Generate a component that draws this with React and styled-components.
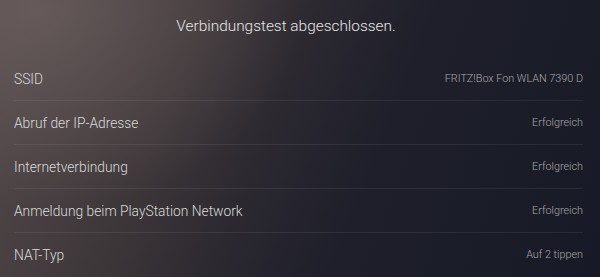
import styled, { createGlobalStyle } from 'styled-components'

const GlobalStyle = createGlobalStyle`
  html, body {
    margin: 0;
    padding: 0;
    background: #171a26;
  }
  * { box-sizing: border-box; }
`

const Screen = styled.div`
  width: 600px;
  height: 277px;
  overflow: hidden;
  font-family: Roboto, "Open Sans", "Liberation Sans", sans-serif;
  font-weight: 300;
  color: #dcdcdc;
  background:
    radial-gradient(ellipse 260px 200px at 40px 10px, rgba(120, 106, 104, 0.55), rgba(120, 106, 104, 0) 100%),
    linear-gradient(112deg, #544a4b 0%, #3d3639 30%, #2b2830 46%, #1e1f2b 62%, #171a26 100%);
  display: flex;
  flex-direction: column;
`

const Title = styled.h1`
  margin: 0;
  height: 59px;
  padding: 16px 28px 0 0;
  text-align: center;
  font-size: 15.4px;
  font-weight: 300;
  line-height: 20px;
  color: #e6e6e6;
`

const List = styled.div`
  display: flex;
  flex-direction: column;
  padding: 0 17px 0 14px;
`

const Row = styled.div`
  height: 44px;
  display: flex;
  align-items: center;
  justify-content: space-between;
  border-bottom: 1px solid ${p => (p.$last ? 'transparent' : 'rgba(255, 255, 255, 0.07)')};
`

const Label = styled.span`
  font-size: 13.8px;
  color: #dadada;
`

const Value = styled.span`
  font-size: 10.8px;
  color: #a8a8ac;
`

const rows = [
  ['SSID', 'FRITZ!Box Fon WLAN 7390 D'],
  ['Abruf der IP-Adresse', 'Erfolgreich'],
  ['Internetverbindung', 'Erfolgreich'],
  ['Anmeldung beim PlayStation Network', 'Erfolgreich'],
  ['NAT-Typ', 'Auf 2 tippen'],
]

const App = () => {
  return (
    <>
      <GlobalStyle />
      <Screen>
        <Title>Verbindungstest abgeschlossen.</Title>
        <List>
          {rows.map(([label, value], i) => (
            <Row key={label} $last={i === rows.length - 1}>
              <Label>{label}</Label>
              <Value>{value}</Value>
            </Row>
          ))}
        </List>
      </Screen>
    </>
  )
}

export default App
